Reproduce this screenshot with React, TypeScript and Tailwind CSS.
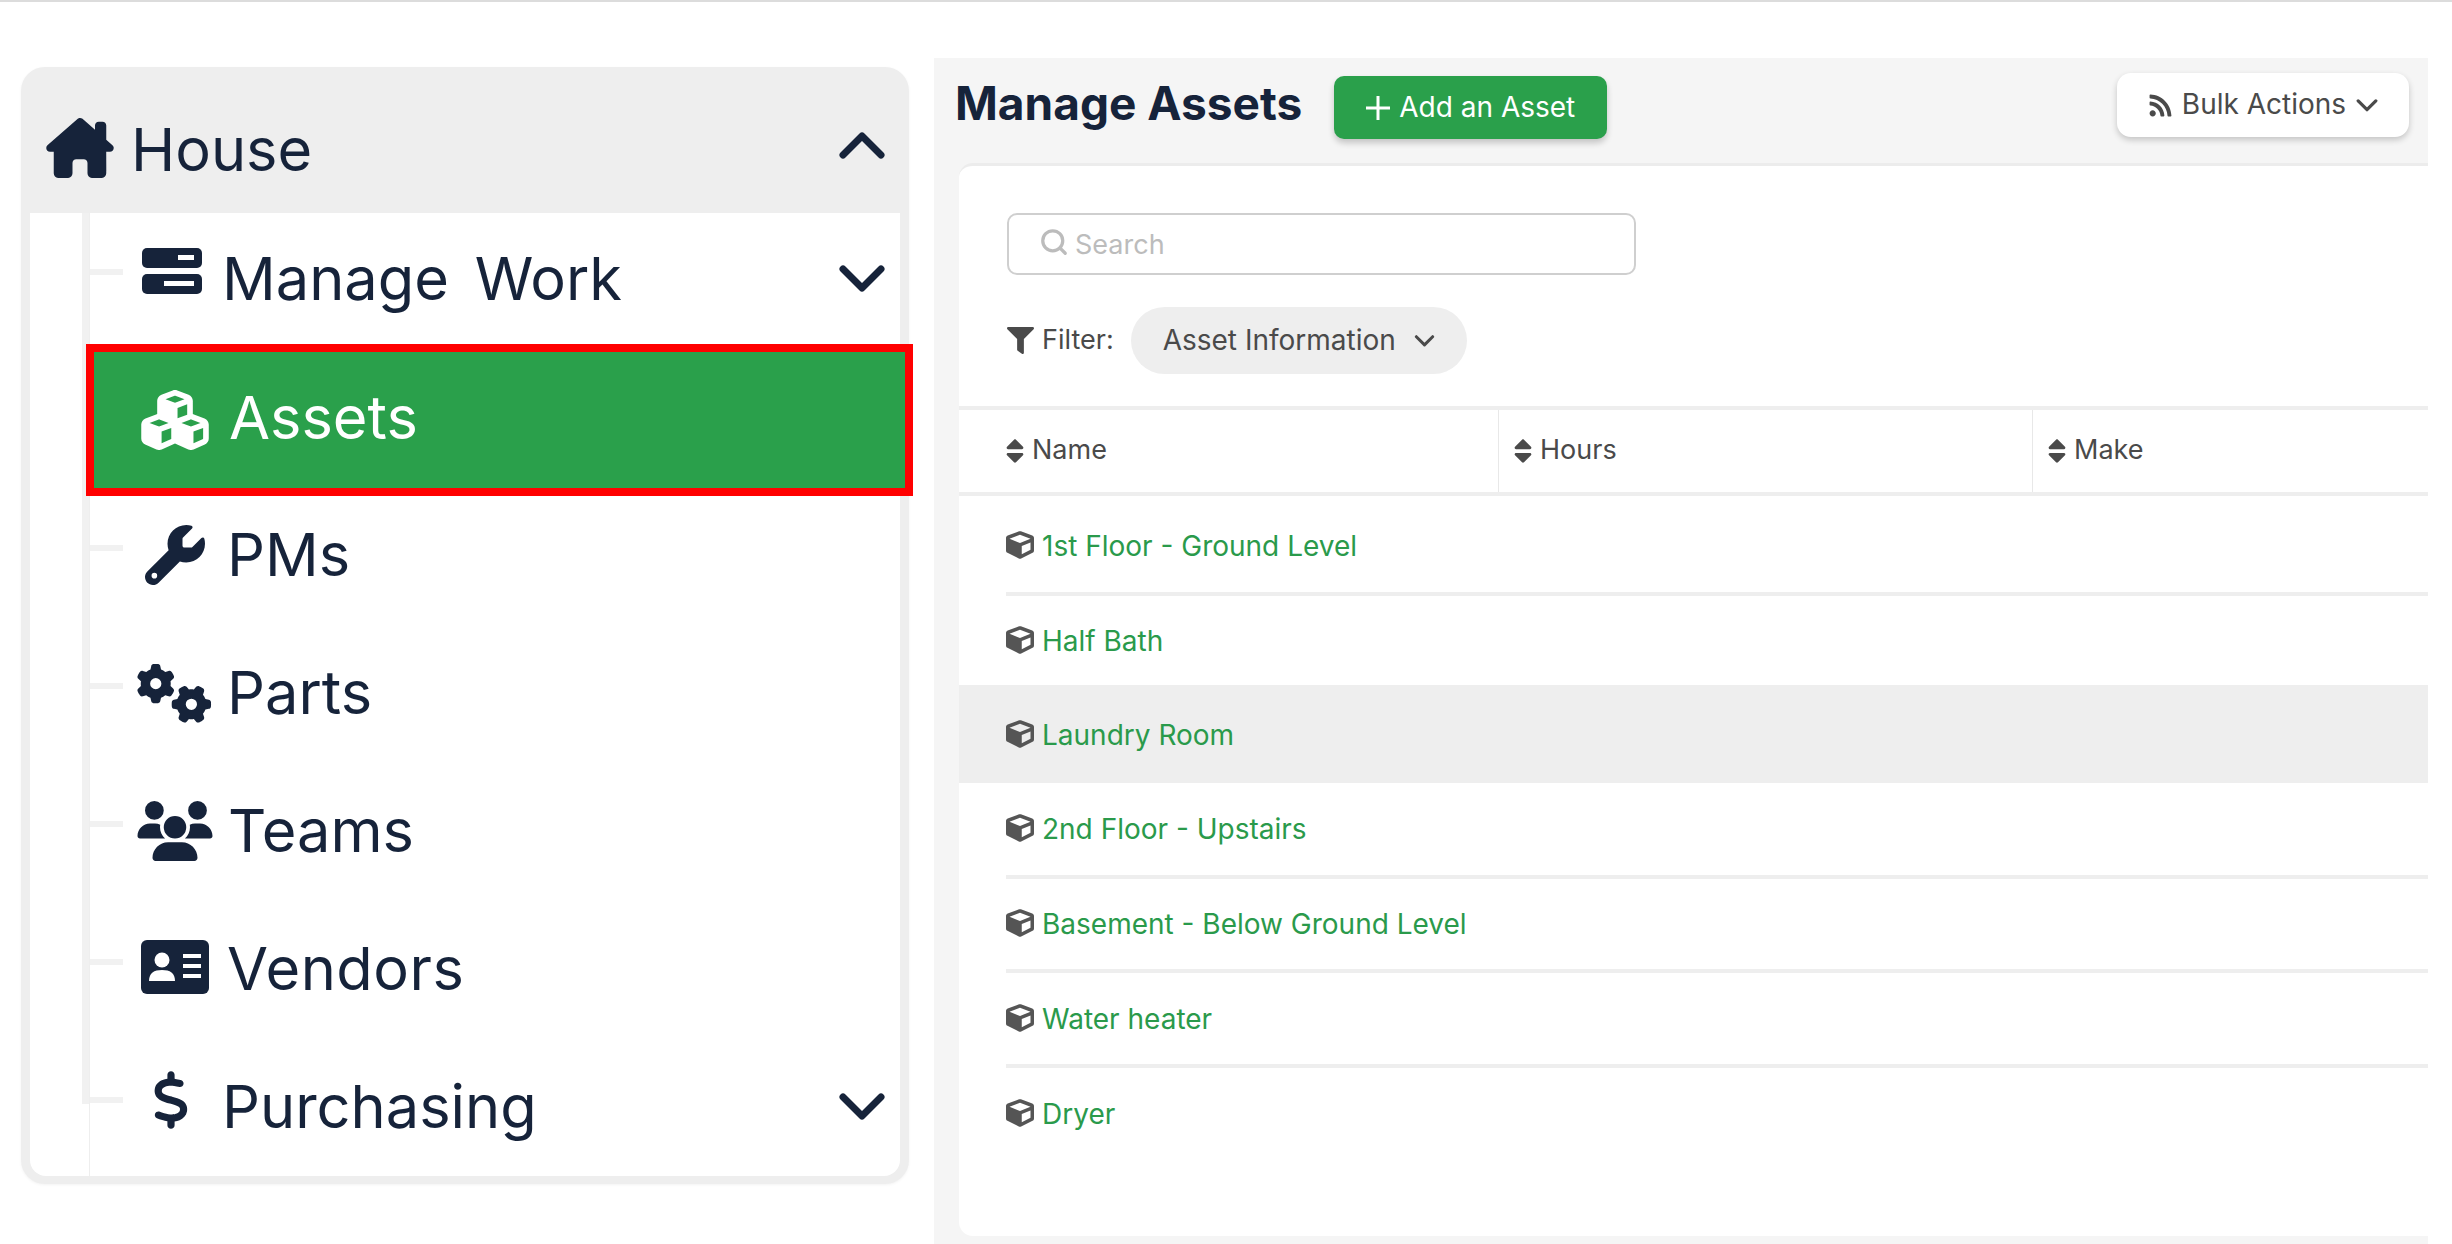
import React from "react";
import { FaFilter, FaSort, FaCube, FaRss } from "react-icons/fa";
import { FaHouseChimney, FaCubes, FaWrench, FaGears, FaUsers, FaDollarSign } from "react-icons/fa6";
import { Search } from "lucide-react";

function Chevron({ up = false, className = "" }: { up?: boolean; className?: string }) {
  return (
    <svg viewBox="0 0 46 28" className={className} fill="none" stroke="currentColor" strokeWidth="7" strokeLinecap="round" strokeLinejoin="round">
      <path d={up ? "M4 24 L23 5 L42 24" : "M4 4 L23 23 L42 4"} />
    </svg>
  );
}

function WorkIcon() {
  return (
    <svg viewBox="0 0 60 46" className="w-[60px] h-[46px]">
      <rect x="0" y="0" width="60" height="20" rx="5" fill="#16233a" />
      <rect x="36" y="7" width="16" height="5" fill="#fff" />
      <rect x="0" y="26" width="60" height="20" rx="5" fill="#16233a" />
      <rect x="22" y="33" width="30" height="5" fill="#fff" />
    </svg>
  );
}

function CardIcon() {
  return (
    <svg viewBox="0 0 68 54" className="w-[68px] h-[54px]">
      <rect x="0" y="0" width="68" height="54" rx="6" fill="#16233a" />
      <circle cx="21" cy="20" r="7.5" fill="#fff" />
      <path d="M8 41 C8 33 13 30 21 30 C29 30 34 33 34 41 Z" fill="#fff" />
      <rect x="42" y="14" width="18" height="4" fill="#fff" />
      <rect x="42" y="24" width="18" height="4" fill="#fff" />
      <rect x="42" y="34" width="18" height="4" fill="#fff" />
    </svg>
  );
}

function Tick({ className = "" }: { className?: string }) {
  return <div className={`w-[33px] h-[6px] bg-[#f1f1f1] shrink-0 ${className}`} />;
}

function NavRow({ icon, label, chevron, rowClass, iconBox, textClass, tickClass }: { icon: React.ReactNode; label: string; chevron?: boolean; rowClass: string; iconBox: string; textClass: string; tickClass: string }) {
  return (
    <div className={`flex items-center pr-[15px] ${rowClass}`}>
      <Tick className={tickClass} />
      <div className={`flex items-center justify-center shrink-0 ${iconBox}`}>{icon}</div>
      <span className={`text-[59.5px] leading-none ${textClass}`}>{label}</span>
      {chevron && <Chevron className="ml-auto w-[46px] h-[28px] text-[#16233a]" />}
    </div>
  );
}

const assets = [
  { name: "1st Floor - Ground Level", cls: "h-[100px] pt-[3px] ml-[47px] border-b-4 border-[#eeeeee]" },
  { name: "Half Bath", cls: "h-[89px] pl-[47px]" },
  { name: "Laundry Room", cls: "h-[98px] pt-[2px] pl-[47px] bg-[#eeeeee]" },
  { name: "2nd Floor - Upstairs", cls: "h-[96px] ml-[47px] border-b-4 border-[#eeeeee]" },
  { name: "Basement - Below Ground Level", cls: "h-[94px] ml-[47px] border-b-4 border-[#eeeeee]" },
  { name: "Water heater", cls: "h-[95px] ml-[47px] border-b-4 border-[#eeeeee]" },
  { name: "Dryer", cls: "h-[91px] ml-[47px]" },
];

export default function App() {
  return (
    <div className="w-[2452px] h-[1244px] overflow-hidden bg-white border-t-2 border-[#dcdcdc] flex items-start font-['Inter',sans-serif] text-[#16233a]">
      {/* Left navigation panel */}
      <div className="ml-[21px] mt-[65px] w-[888px] h-[1117px] rounded-[24px] bg-[#eeeeee] shrink-0 flex flex-col shadow-[0_1px_3px_rgba(0,0,0,0.05)]">
        <div className="h-[146px] shrink-0 flex items-center pl-[25px] pr-[24px] pt-[16px]">
          <FaHouseChimney className="w-[68px] h-[60px] shrink-0 text-[#16233a]" />
          <span className="ml-[17px] text-[59.5px] leading-none translate-y-[2px]">House</span>
          <Chevron up className="ml-auto w-[46px] h-[28px] text-[#16233a] -translate-y-[3px]" />
        </div>
        <div className="mx-[9px] mb-[8px] flex-1 bg-white rounded-b-[16px] flex">
          <div className="ml-[52px] w-[7px] h-[891px] bg-[#f1f1f1] shrink-0" />
          <div className="flex-1 border-l border-[#eeeeee] flex flex-col min-w-0">
            <NavRow icon={<WorkIcon />} label="Manage Work" chevron rowClass="h-[131px]" iconBox="w-[104px] -translate-x-[3px] -translate-y-[8px]" textClass="-ml-[5px] [word-spacing:9px]" tickClass="-translate-y-[7px]" />
            <div className="h-[152px] -ml-[4px] -mr-[13px] border-[8px] border-[#ff0000] bg-[#2aa04b] flex items-center text-white">
              <FaCubes className="ml-[46px] w-[70px] h-[60px] shrink-0" />
              <span className="ml-[19px] text-[59.5px] leading-none -translate-y-[2px]">Assets</span>
            </div>
            <NavRow icon={<FaWrench className="w-[62px] h-[60px] -translate-x-[2px]" />} label="PMs" rowClass="h-[128px] pb-[10px]" iconBox="w-[107px]" textClass="-ml-[3px]" tickClass="-translate-y-[7px]" />
            <NavRow icon={<FaGears className="w-[75px] h-[60px] -translate-x-[2px]" />} label="Parts" rowClass="h-[138px]" iconBox="w-[107px]" textClass="-ml-[3px]" tickClass="-translate-y-[7px]" />
            <NavRow icon={<FaUsers className="w-[76px] h-[60px] -translate-x-[2px]" />} label="Teams" rowClass="h-[138px]" iconBox="w-[107px]" textClass="-ml-[2px]" tickClass="-translate-y-[7px]" />
            <NavRow icon={<CardIcon />} label="Vendors" rowClass="h-[138px]" iconBox="w-[107px] -translate-x-[2px] -translate-y-[2px]" textClass="-ml-[3px] tracking-[0.5px]" tickClass="-translate-y-[7px]" />
            <NavRow icon={<FaDollarSign className="w-[36px] h-[60px] -translate-x-[4px] -translate-y-[7px]" />} label="Purchasing" chevron rowClass="h-[138px]" iconBox="w-[104px]" textClass="-ml-[5px]" tickClass="-translate-y-[7px]" />
          </div>
        </div>
      </div>

      {/* Right content panel */}
      <div className="ml-[25px] mt-[56px] w-[1494px] h-[1186px] bg-[#f5f5f5] shrink-0 flex flex-col">
        <div className="h-[105px] shrink-0 flex items-start pl-[21px] pr-[19px]">
          <h1 className="mt-[17px] text-[46px] leading-[56px] font-bold text-[#16233a]">Manage Assets</h1>
          <button className="ml-[32px] mt-[18px] w-[273px] h-[63px] rounded-[10px] bg-[#2aa04b] text-white flex items-center justify-center text-[28px] shadow-[0_4px_6px_rgba(0,0,0,0.2)]">
            <svg viewBox="0 0 24 24" className="w-[24px] h-[24px] mr-[9px]" stroke="currentColor" strokeWidth="3" fill="none"><path d="M12 0 V24 M0 12 H24" /></svg>
            <span className="-translate-y-[1px]">Add an Asset</span>
          </button>
          <button className="ml-auto mt-[15px] w-[292px] h-[64px] rounded-[14px] bg-white text-[#4a4a4a] flex items-center justify-center text-[28px] shadow-[0_3px_6px_rgba(0,0,0,0.2)]">
            <FaRss className="w-[25px] h-[25px] mr-[9px]" />
            <span className="-translate-y-[1px]">Bulk Actions</span>
            <Chevron className="ml-[10px] w-[22px] h-[13px]" />
          </button>
        </div>
        <div className="ml-[25px] h-[1073px] shrink-0 bg-white rounded-tl-[14px] rounded-bl-[14px] border-t-[3px] border-[#ececec] flex flex-col">
          <div className="ml-[48px] mt-[47px] w-[629px] h-[62px] border-2 border-[#cfcfcf] rounded-[10px] flex items-center pl-[30px] text-[#bcbcbc] text-[27px]">
            <Search className="w-[30px] h-[30px] mr-[6px] -translate-y-[2px]" strokeWidth={2.6} />
            <span className="translate-y-[1px]">Search</span>
          </div>
          <div className="ml-[48px] mt-[32px] h-[67px] flex items-center text-[#4a4a4a] text-[27px]">
            <FaFilter className="w-[27px] h-[27px] mr-[8px]" />
            <span>Filter:</span>
            <div className="ml-[17px] w-[336px] h-[67px] rounded-full bg-[#eeeeee] flex items-center pl-[32px] text-[28px]">
              <span className="-translate-y-[1px]">Asset Information</span>
              <Chevron className="ml-[18px] w-[21px] h-[12px]" />
            </div>
          </div>
          <div className="mt-[32px] h-[90px] shrink-0 border-y-4 border-[#eeeeee] flex text-[27px] text-[#4a4a4a]">
            <div className="w-[540px] flex items-center pl-[46px] border-r border-[#e8e8e8]">
              <FaSort className="w-[20px] h-[30px] mr-[7px]" /><span className="-translate-y-[1px]">Name</span>
            </div>
            <div className="w-[534px] flex items-center pl-[14px] border-r border-[#e8e8e8]">
              <FaSort className="w-[20px] h-[30px] mr-[7px]" /><span className="-translate-y-[1px]">Hours</span>
            </div>
            <div className="flex-1 flex items-center pl-[14px]">
              <FaSort className="w-[20px] h-[30px] mr-[7px]" /><span className="-translate-y-[1px]">Make</span>
            </div>
          </div>
          {assets.map((a) => (
            <div key={a.name} className={`flex items-center text-[28px] text-[#2a9a4b] shrink-0 ${a.cls}`}>
              <FaCube className="w-[28px] h-[28px] mr-[8px] text-[#555555] -translate-y-[1px]" />
              {a.name}
            </div>
          ))}
        </div>
      </div>
    </div>
  );
}
